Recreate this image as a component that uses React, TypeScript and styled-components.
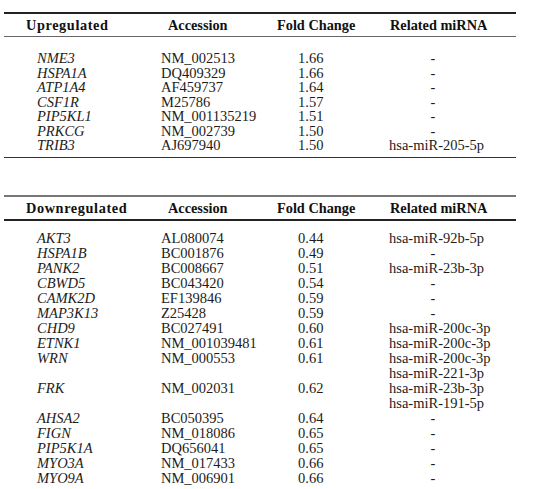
import React from "react";
import styled, { createGlobalStyle } from "styled-components";

type Gene = { name: string; acc: string; fold: string; mirna: string[] };

const up: Gene[] = [
  { name: "NME3", acc: "NM_002513", fold: "1.66", mirna: [] },
  { name: "HSPA1A", acc: "DQ409329", fold: "1.66", mirna: [] },
  { name: "ATP1A4", acc: "AF459737", fold: "1.64", mirna: [] },
  { name: "CSF1R", acc: "M25786", fold: "1.57", mirna: [] },
  { name: "PIP5KL1", acc: "NM_001135219", fold: "1.51", mirna: [] },
  { name: "PRKCG", acc: "NM_002739", fold: "1.50", mirna: [] },
  { name: "TRIB3", acc: "AJ697940", fold: "1.50", mirna: ["hsa-miR-205-5p"] },
];

const down: Gene[] = [
  { name: "AKT3", acc: "AL080074", fold: "0.44", mirna: ["hsa-miR-92b-5p"] },
  { name: "HSPA1B", acc: "BC001876", fold: "0.49", mirna: [] },
  { name: "PANK2", acc: "BC008667", fold: "0.51", mirna: ["hsa-miR-23b-3p"] },
  { name: "CBWD5", acc: "BC043420", fold: "0.54", mirna: [] },
  { name: "CAMK2D", acc: "EF139846", fold: "0.59", mirna: [] },
  { name: "MAP3K13", acc: "Z25428", fold: "0.59", mirna: [] },
  { name: "CHD9", acc: "BC027491", fold: "0.60", mirna: ["hsa-miR-200c-3p"] },
  { name: "ETNK1", acc: "NM_001039481", fold: "0.61", mirna: ["hsa-miR-200c-3p"] },
  {
    name: "WRN",
    acc: "NM_000553",
    fold: "0.61",
    mirna: ["hsa-miR-200c-3p", "hsa-miR-221-3p"],
  },
  {
    name: "FRK",
    acc: "NM_002031",
    fold: "0.62",
    mirna: ["hsa-miR-23b-3p", "hsa-miR-191-5p"],
  },
  { name: "AHSA2", acc: "BC050395", fold: "0.64", mirna: [] },
  { name: "FIGN", acc: "NM_018086", fold: "0.65", mirna: [] },
  { name: "PIP5K1A", acc: "DQ656041", fold: "0.65", mirna: [] },
  { name: "MYO3A", acc: "NM_017433", fold: "0.66", mirna: [] },
  { name: "MYO9A", acc: "NM_006901", fold: "0.66", mirna: [] },
];

const GlobalStyle = createGlobalStyle`
  html, body {
    margin: 0;
    padding: 0;
    background: #ffffff;
  }
`;

const Page = styled.div`
  width: 512px;
  padding: 12px 0 0 4px;
  display: flex;
  flex-direction: column;
  font-family: "Liberation Serif", "Times New Roman", serif;
  color: #1c1c1c;
`;

const Table = styled.section<{ $gap?: number }>`
  display: flex;
  flex-direction: column;
  margin-top: ${(p) => p.$gap ?? 0}px;
`;

// horizontal rules of the booktabs-like table
const Rule = styled.div<{ $h: number; $c: string }>`
  height: ${(p) => p.$h}px;
  background: ${(p) => p.$c};
`;

const HeadRow = styled.div<{ $h: number }>`
  display: grid;
  grid-template-columns: 142px 109px 113px 1fr;
  padding-left: 22px;
  height: ${(p) => p.$h}px;
  align-items: center;
  font-weight: bold;
  font-size: 14.3px;
  line-height: 16px;
  color: #111;
`;

const HeadCell = styled.div<{ $wide?: boolean }>`
  letter-spacing: ${(p) => (p.$wide ? "0.6px" : "0")};
  white-space: nowrap;
`;

const Body = styled.div<{ $top: number; $bottom: number; $lh: number }>`
  display: flex;
  flex-direction: column;
  padding: ${(p) => p.$top}px 0 ${(p) => p.$bottom}px;
  font-size: 14.5px;
  line-height: ${(p) => p.$lh}px;
`;

const Row = styled.div`
  display: grid;
  grid-template-columns: 157px 137px 91px 127px;
  align-items: start;
`;

const GeneName = styled.div`
  padding-left: 33px;
  font-style: italic;
  white-space: nowrap;
`;

const Cell = styled.div`
  white-space: nowrap;
`;

const MiList = styled.div`
  display: flex;
  flex-direction: column;
`;

const Dash = styled.div`
  width: 88px;
  text-align: center;
`;

const Rows = ({ data }: { data: Gene[] }) => (
  <>
    {data.map((g) => (
      <Row key={g.name}>
        <GeneName>{g.name}</GeneName>
        <Cell>{g.acc}</Cell>
        <Cell>{g.fold}</Cell>
        {g.mirna.length ? (
          <MiList>
            {g.mirna.map((m) => (
              <Cell key={m}>{m}</Cell>
            ))}
          </MiList>
        ) : (
          <Dash>-</Dash>
        )}
      </Row>
    ))}
  </>
);

const App = () => {
  return (
    <>
      <GlobalStyle />
      <Page>
        <Table>
          <Rule $h={2} $c="#222" />
          <HeadRow $h={22}>
            <HeadCell $wide>Upregulated</HeadCell>
            <HeadCell>Accession</HeadCell>
            <HeadCell>Fold Change</HeadCell>
            <HeadCell>Related miRNA</HeadCell>
          </HeadRow>
          <Rule $h={1} $c="#666" />
          <Body $top={14} $bottom={4} $lh={14.5}>
            <Rows data={up} />
          </Body>
          <Rule $h={1.5} $c="#333" />
        </Table>

        <Table $gap={37}>
          <Rule $h={1.5} $c="#777" />
          <HeadRow $h={22}>
            <HeadCell $wide>Downregulated</HeadCell>
            <HeadCell>Accession</HeadCell>
            <HeadCell>Fold Change</HeadCell>
            <HeadCell>Related miRNA</HeadCell>
          </HeadRow>
          <Rule $h={2} $c="#222" />
          <Body $top={10} $bottom={0} $lh={15}>
            <Rows data={down} />
          </Body>
        </Table>
      </Page>
    </>
  );
};

export default App;
